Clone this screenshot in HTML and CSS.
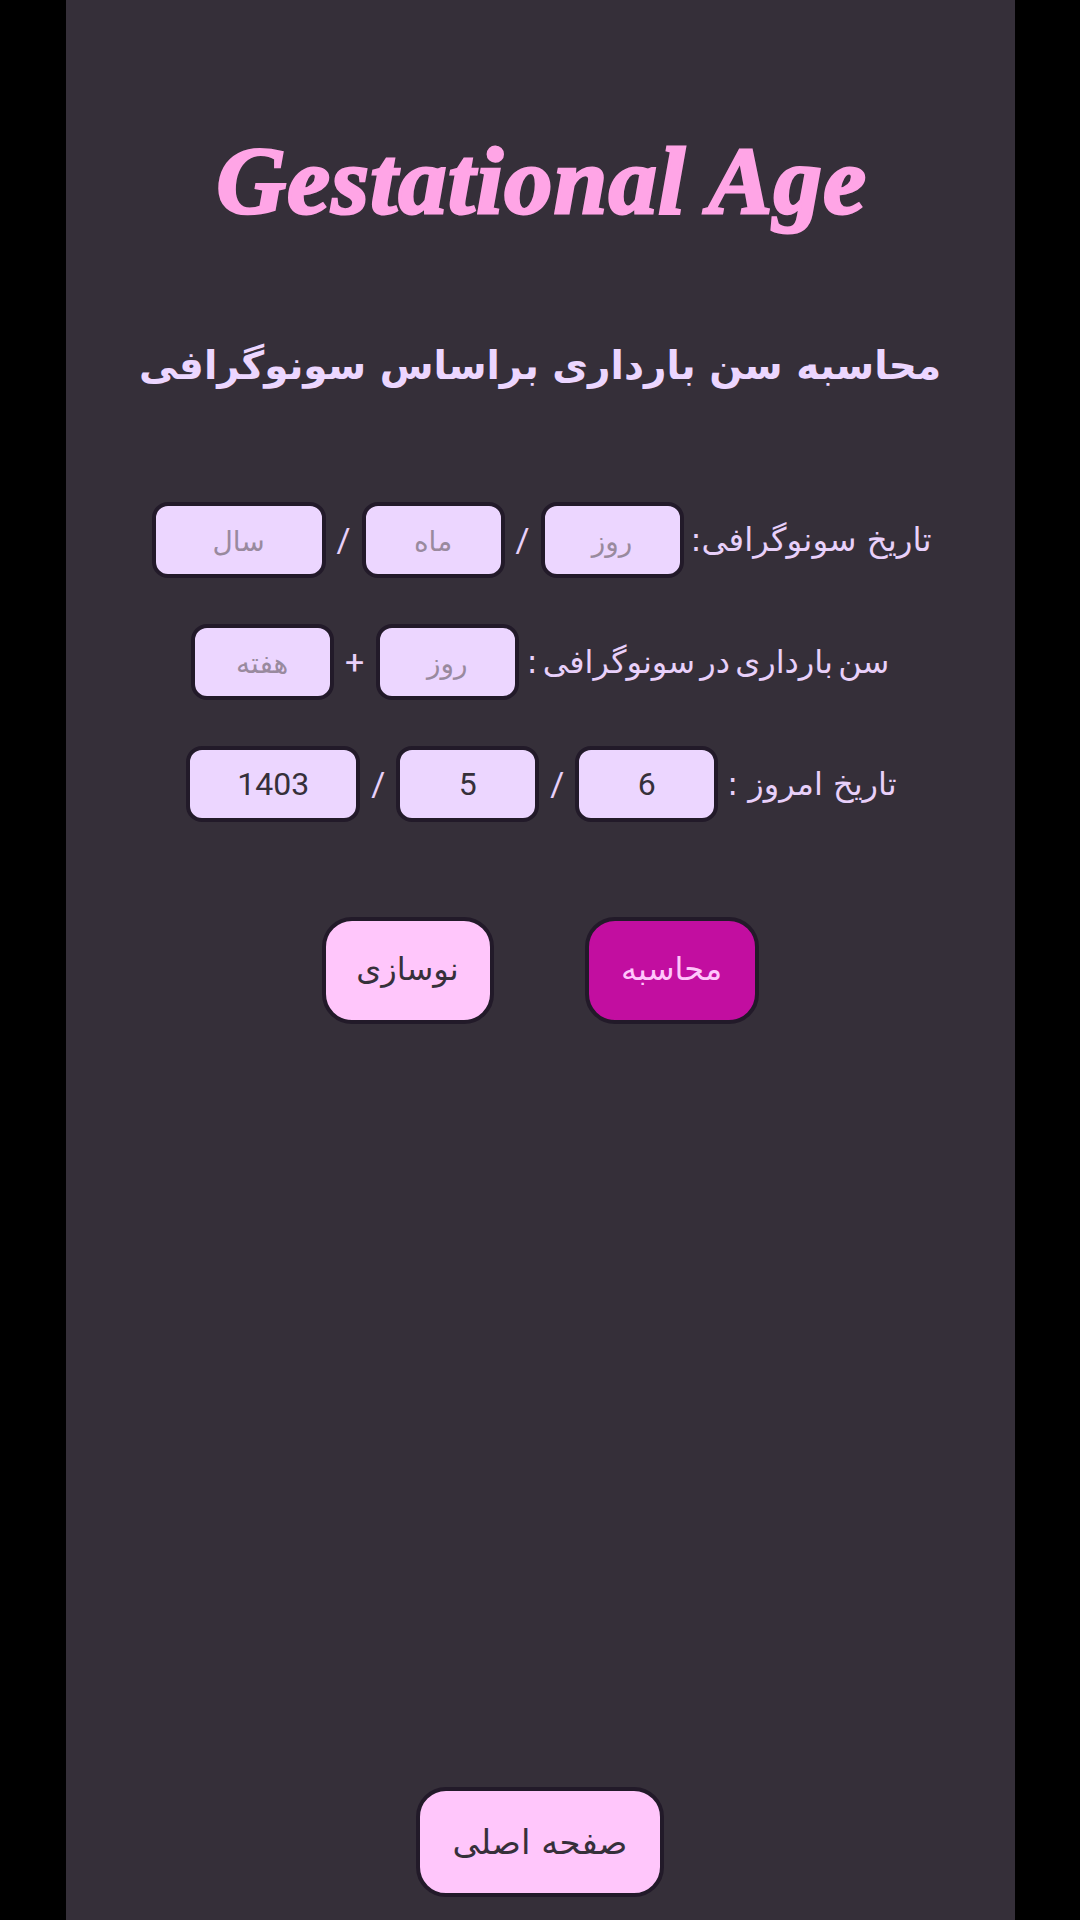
FILE: index.html
```html
<!DOCTYPE html>
<html lang="fa">
<head>
<meta charset="utf-8">
<title>Gestational Age</title>
<link rel="stylesheet" href="styles.css">
</head>
<body>
<main class="panel">
  <h1 class="title">Gestational Age</h1>
  <h2 class="heading" dir="rtl">محاسبه سن بارداری براساس سونوگرافی</h2>
  <form class="form" dir="rtl">
    <div class="row row-nudge">
      <label class="label label-wide">تاریخ سونوگرافی:</label>
      <input class="field" placeholder="روز">
      <span class="sep">/</span>
      <input class="field" placeholder="ماه">
      <span class="sep">/</span>
      <input class="field field-wide" placeholder="سال">
    </div>
    <div class="row">
      <label class="label label-tight">سن بارداری در سونوگرافی :</label>
      <input class="field" placeholder="روز">
      <span class="sep sep-plus">+</span>
      <input class="field" placeholder="هفته">
    </div>
    <div class="row row-nudge">
      <label class="label label-spaced">تاریخ امروز :</label>
      <input class="field" value="6">
      <span class="sep">/</span>
      <input class="field" value="5">
      <span class="sep">/</span>
      <input class="field field-wide" value="1403">
    </div>
    <div class="actions">
      <button type="button" class="btn btn-primary">محاسبه</button>
      <button type="button" class="btn">نوسازی</button>
    </div>
  </form>
  <button type="button" class="btn btn-home">صفحه اصلی</button>
</main>
</body>
</html>
```
FILE: styles.css
```css
* { box-sizing: border-box; }
html, body { margin: 0; height: 100%; }
body {
  background: #000;
  display: flex;
  justify-content: center;
  font-family: "DejaVu Sans", "Noto Sans", sans-serif;
}
.panel {
  width: 949px;
  height: 1920px;
  background: #352f39;
  display: flex;
  flex-direction: column;
  align-items: center;
  padding-top: 126px;
  padding-bottom: 23px;
}
.title {
  margin: 0 0 0 4px;
  height: 110px;
  font-family: "Liberation Serif", serif;
  font-style: italic;
  font-weight: 700;
  font-size: 96px;
  line-height: 110px;
  letter-spacing: 1.5px;
  color: #ffa5e6;
  -webkit-text-stroke: 3px #ffa5e6;
}
.heading {
  margin: 100px 0 0;
  height: 60px;
  font-size: 39px;
  line-height: 60px;
  font-weight: 700;
  color: #ecd6ff;
}
.form {
  margin-top: 106px;
  display: flex;
  flex-direction: column;
  align-items: center;
  gap: 46px;
}
.row {
  display: flex;
  align-items: center;
  height: 76px;
}
.row-nudge { margin-left: 3px; }
.label {
  font-size: 32px;
  color: #e8d0fa;
  margin-left: 10px;
  white-space: nowrap;
}
.label-wide { font-size: 32.5px; margin-left: 7px; }
.label-spaced { margin-left: 9px; }
.label-tight { margin-left: 8px; word-spacing: -5px; }
.field {
  width: 143px;
  height: 76px;
  border: 4px solid #221a29;
  border-radius: 16px;
  background: #ecd6ff;
  color: #36303a;
  font-family: Roboto, "DejaVu Sans", sans-serif;
  font-size: 32px;
  text-align: center;
  padding: 0;
  outline: none;
}
.field::placeholder { color: #998a9e; opacity: 1; font-family: "DejaVu Sans", sans-serif; font-size: 28px; }
.field-wide { width: 174px; }
.sep {
  width: 36px;
  text-align: center;
  font-family: Roboto, sans-serif;
  font-size: 34px;
  color: #e8d0fa;
}
.sep-plus { width: 42px; }
.actions {
  display: flex;
  gap: 91px;
  margin-top: 49px;
}
.btn {
  width: 172px;
  height: 107px;
  border: 4px solid #221a29;
  border-radius: 30px;
  background: #ffc6fb;
  color: #36303a;
  font-family: "DejaVu Sans", sans-serif;
  font-size: 32px;
  padding: 0 0 4px;
}
.btn-primary { width: 174px; background: #c20ea0; color: #ffc6fb; }
.btn-home { width: 248px; height: 110px; margin-top: auto; font-size: 34px; padding: 0; }
```
